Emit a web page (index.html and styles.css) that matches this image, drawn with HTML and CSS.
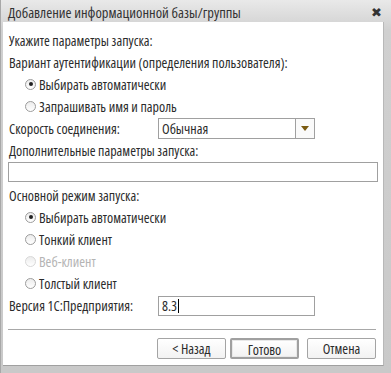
FILE: index.html
```html
<!DOCTYPE html>
<html>
    <head>
        <title>Добавление информационной базы/группы</title>
        <link rel="stylesheet" href="styles.css">
    </head>
    <body>
        <div class="window">
            <div class="titlebar">
                <span class="title">Добавление информационной базы/группы</span>
                <span class="close">✖</span>
            </div>

            <div class="content">
                <div class="row">Укажите параметры запуска:</div>
                <div class="row">Вариант аутентификации (определения пользователя):</div>
                <div class="row indent"><span class="radio checked"></span>Выбирать автоматически</div>
                <div class="row indent"><span class="radio"></span>Запрашивать имя и пароль</div>

                <div class="row field">
                    <span class="label">Скорость соединения:</span>
                    <div class="select">
                        <span class="value">Обычная</span>
                        <span class="drop"><span class="tri"></span></span>
                    </div>
                </div>

                <div class="row">Дополнительные параметры запуска:</div>
                <div class="wide-input"></div>

                <div class="row section">Основной режим запуска:</div>
                <div class="row indent"><span class="radio checked"></span>Выбирать автоматически</div>
                <div class="row indent"><span class="radio"></span>Тонкий клиент</div>
                <div class="row indent disabled"><span class="radio"></span>Веб-клиент</div>
                <div class="row indent"><span class="radio"></span>Толстый клиент</div>

                <div class="row field version">
                    <span class="label">Версия 1С:Предприятия:</span>
                    <div class="input">8.3<span class="caret"></span></div>
                </div>

                <div class="separator"></div>

                <div class="buttons">
                    <button class="btn">&lt; Назад</button>
                    <button class="btn default">Готово</button>
                    <button class="btn cancel">Отмена</button>
                </div>
            </div>
        </div>
    </body>
</html>
```

FILE: styles.css
```css
html, body {
    margin: 0;
    padding: 0;
}

body {
    font-family: "Open Sans", sans-serif;
    font-stretch: condensed;
    font-size: 14px;
    color: #2b2b2b;
}

.window {
    width: 391px;
    height: 373px;
    box-sizing: border-box;
    background: linear-gradient(#e9e9e9, #d0d0d0 30px, #c9c9c9);
    border-left: 1px solid #a8a8a8;
    display: flex;
    flex-direction: column;
}

.titlebar {
    height: 22px;
    display: flex;
    align-items: center;
    justify-content: space-between;
    padding: 0 9px 0 7px;
    flex: none;
}

.title {
    font-size: 14.5px;
    color: #333;
    padding-top: 2px;
    white-space: nowrap;
}

.close {
    font-family: "DejaVu Sans", sans-serif;
    font-stretch: normal;
    font-size: 13px;
    line-height: 13px;
    color: #333;
    padding-top: 3px;
}

.content {
    flex: 1;
    background: #fff;
    margin: 0 7px 7px 2px;
    padding: 7px 5px 0 6px;
    border-right: 1px solid #b8b8b8;
    border-bottom: 1px solid #a0a0a0;
    display: flex;
    flex-direction: column;
}

.row {
    height: 22px;
    display: flex;
    align-items: center;
    white-space: nowrap;
}

.indent {
    padding-left: 16px;
}

.disabled {
    color: #b4b4b4;
}

.radio {
    width: 11px;
    height: 11px;
    border-radius: 50%;
    border: 1px solid #9c9c9c;
    background: linear-gradient(#ececec, #fff);
    margin-right: 3px;
    box-sizing: border-box;
    position: relative;
}

.disabled .radio {
    border-color: #d8d8d8;
}

.radio.checked::after {
    content: "";
    position: absolute;
    left: 2.5px;
    top: 2.5px;
    width: 4px;
    height: 4px;
    border-radius: 50%;
    background: #222;
}

.field .label {
    width: 149px;
}

.select {
    width: 157px;
    height: 21px;
    box-sizing: border-box;
    border: 1px solid #a0a0a0;
    display: flex;
    align-items: center;
}

.select .value {
    flex: 1;
    padding-left: 3px;
}

.drop {
    width: 18px;
    height: 100%;
    border-left: 1px solid #a0a0a0;
    display: flex;
    align-items: center;
    justify-content: center;
    background: #fafafa;
}

.tri {
    width: 0;
    height: 0;
    border-left: 4px solid transparent;
    border-right: 4px solid transparent;
    border-top: 5px solid #7a5a10;
    margin-top: 1px;
}

.wide-input {
    height: 20px;
    box-sizing: border-box;
    border: 1px solid #a0a0a0;
    margin: 1px 0 0 -1px;
}

.section {
    margin-top: 2px;
}

.version {
    height: 23px;
}

.input {
    width: 157px;
    height: 20px;
    box-sizing: border-box;
    border: 1px solid #a0a0a0;
    display: flex;
    align-items: center;
    padding-left: 3px;
}

.caret {
    width: 1px;
    height: 14px;
    background: #000;
    margin-left: 1px;
}

.separator {
    height: 1px;
    background: #a8a8a8;
    margin: 12px 2px 0 -1px;
}

.buttons {
    display: flex;
    justify-content: flex-end;
    margin-top: 8px;
    padding-right: 2px;
}

.btn {
    font-family: inherit;
    font-stretch: condensed;
    font-size: 14px;
    color: #2b2b2b;
    width: 69px;
    height: 21px;
    padding: 0;
    border: 1px solid #a4a4a4;
    border-radius: 2px;
    background: linear-gradient(#ffffff, #f2f2f2);
    margin-left: 4px;
}

.btn.default {
    border: 2px solid #a0a0a0;
    box-shadow: inset 0 0 0 1px #e8e8e8;
}

.btn.cancel {
    margin-left: 8px;
}
```
